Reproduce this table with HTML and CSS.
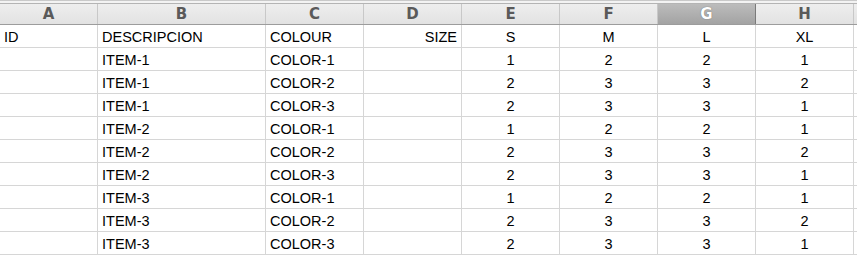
FILE: index.html
```html
<!DOCTYPE html>
<html>
<head>
<meta charset="utf-8">
<link rel="stylesheet" href="styles.css">
</head>
<body>
<div class="sheet">
  <div class="topbar"></div>
  <div class="row head">
    <div class="hc">A</div><div class="hc">B</div><div class="hc">C</div><div class="hc">D</div>
    <div class="hc">E</div><div class="hc">F</div><div class="hc sel">G</div><div class="hc">H</div><div class="hc rest"></div>
  </div>
  <div class="row">
    <div class="c">ID</div><div class="c">DESCRIPCION</div><div class="c">COLOUR</div><div class="c r">SIZE</div>
    <div class="c m">S</div><div class="c m">M</div><div class="c m">L</div><div class="c m">XL</div><div class="c rest"></div>
  </div>
  <div class="row">
    <div class="c"></div><div class="c">ITEM-1</div><div class="c">COLOR-1</div><div class="c"></div>
    <div class="c m">1</div><div class="c m">2</div><div class="c m">2</div><div class="c m">1</div><div class="c rest"></div>
  </div>
  <div class="row">
    <div class="c"></div><div class="c">ITEM-1</div><div class="c">COLOR-2</div><div class="c"></div>
    <div class="c m">2</div><div class="c m">3</div><div class="c m">3</div><div class="c m">2</div><div class="c rest"></div>
  </div>
  <div class="row">
    <div class="c"></div><div class="c">ITEM-1</div><div class="c">COLOR-3</div><div class="c"></div>
    <div class="c m">2</div><div class="c m">3</div><div class="c m">3</div><div class="c m">1</div><div class="c rest"></div>
  </div>
  <div class="row">
    <div class="c"></div><div class="c">ITEM-2</div><div class="c">COLOR-1</div><div class="c"></div>
    <div class="c m">1</div><div class="c m">2</div><div class="c m">2</div><div class="c m">1</div><div class="c rest"></div>
  </div>
  <div class="row">
    <div class="c"></div><div class="c">ITEM-2</div><div class="c">COLOR-2</div><div class="c"></div>
    <div class="c m">2</div><div class="c m">3</div><div class="c m">3</div><div class="c m">2</div><div class="c rest"></div>
  </div>
  <div class="row">
    <div class="c"></div><div class="c">ITEM-2</div><div class="c">COLOR-3</div><div class="c"></div>
    <div class="c m">2</div><div class="c m">3</div><div class="c m">3</div><div class="c m">1</div><div class="c rest"></div>
  </div>
  <div class="row">
    <div class="c"></div><div class="c">ITEM-3</div><div class="c">COLOR-1</div><div class="c"></div>
    <div class="c m">1</div><div class="c m">2</div><div class="c m">2</div><div class="c m">1</div><div class="c rest"></div>
  </div>
  <div class="row">
    <div class="c"></div><div class="c">ITEM-3</div><div class="c">COLOR-2</div><div class="c"></div>
    <div class="c m">2</div><div class="c m">3</div><div class="c m">3</div><div class="c m">2</div><div class="c rest"></div>
  </div>
  <div class="row">
    <div class="c"></div><div class="c">ITEM-3</div><div class="c">COLOR-3</div><div class="c"></div>
    <div class="c m">2</div><div class="c m">3</div><div class="c m">3</div><div class="c m">1</div><div class="c rest"></div>
  </div>
</div>
</body>
</html>
```
FILE: styles.css
```css
html, body {
  margin: 0;
  padding: 0;
  background: #ffffff;
}
.sheet {
  width: 857px;
  overflow: hidden;
}
.topbar {
  height: 2px;
  border-top: 1px solid #c9c9c9;
  border-bottom: 1px solid #b4b4b4;
  background: #f3f3f3;
}
.row {
  display: grid;
  grid-template-columns: 98px 168px 98px 98px 98px 98px 98px 98px 3px;
  height: 23px;
  box-sizing: border-box;
  border-bottom: 1px solid #d6d6d6;
}
.row.head {
  height: 21px;
  border-bottom: 1px solid #9c9c9c;
  background: linear-gradient(#eeeeee, #e2e2e2);
}
.hc {
  border-right: 1px solid #c8c8c8;
  text-align: center;
  font-family: "DejaVu Sans", sans-serif;
  font-weight: bold;
  font-size: 15px;
  line-height: 20px;
  color: #5a5a5a;
}
.hc.sel {
  background: linear-gradient(#bcbcbc, #a3a3a3);
  color: #ffffff;
  border-right-color: #7a7a7a;
  text-shadow: 0 0 1px #555555;
}
.hc.rest, .c.rest {
  border-right: none;
}
.c {
  border-right: 1px solid #d6d6d6;
  font-family: "Liberation Sans", sans-serif;
  font-size: 14.5px;
  line-height: 22px;
  padding: 1px 4px 0 4px;
  color: #000000;
  white-space: nowrap;
  overflow: hidden;
}
.c.r {
  text-align: right;
}
.c.m {
  text-align: center;
}
```
